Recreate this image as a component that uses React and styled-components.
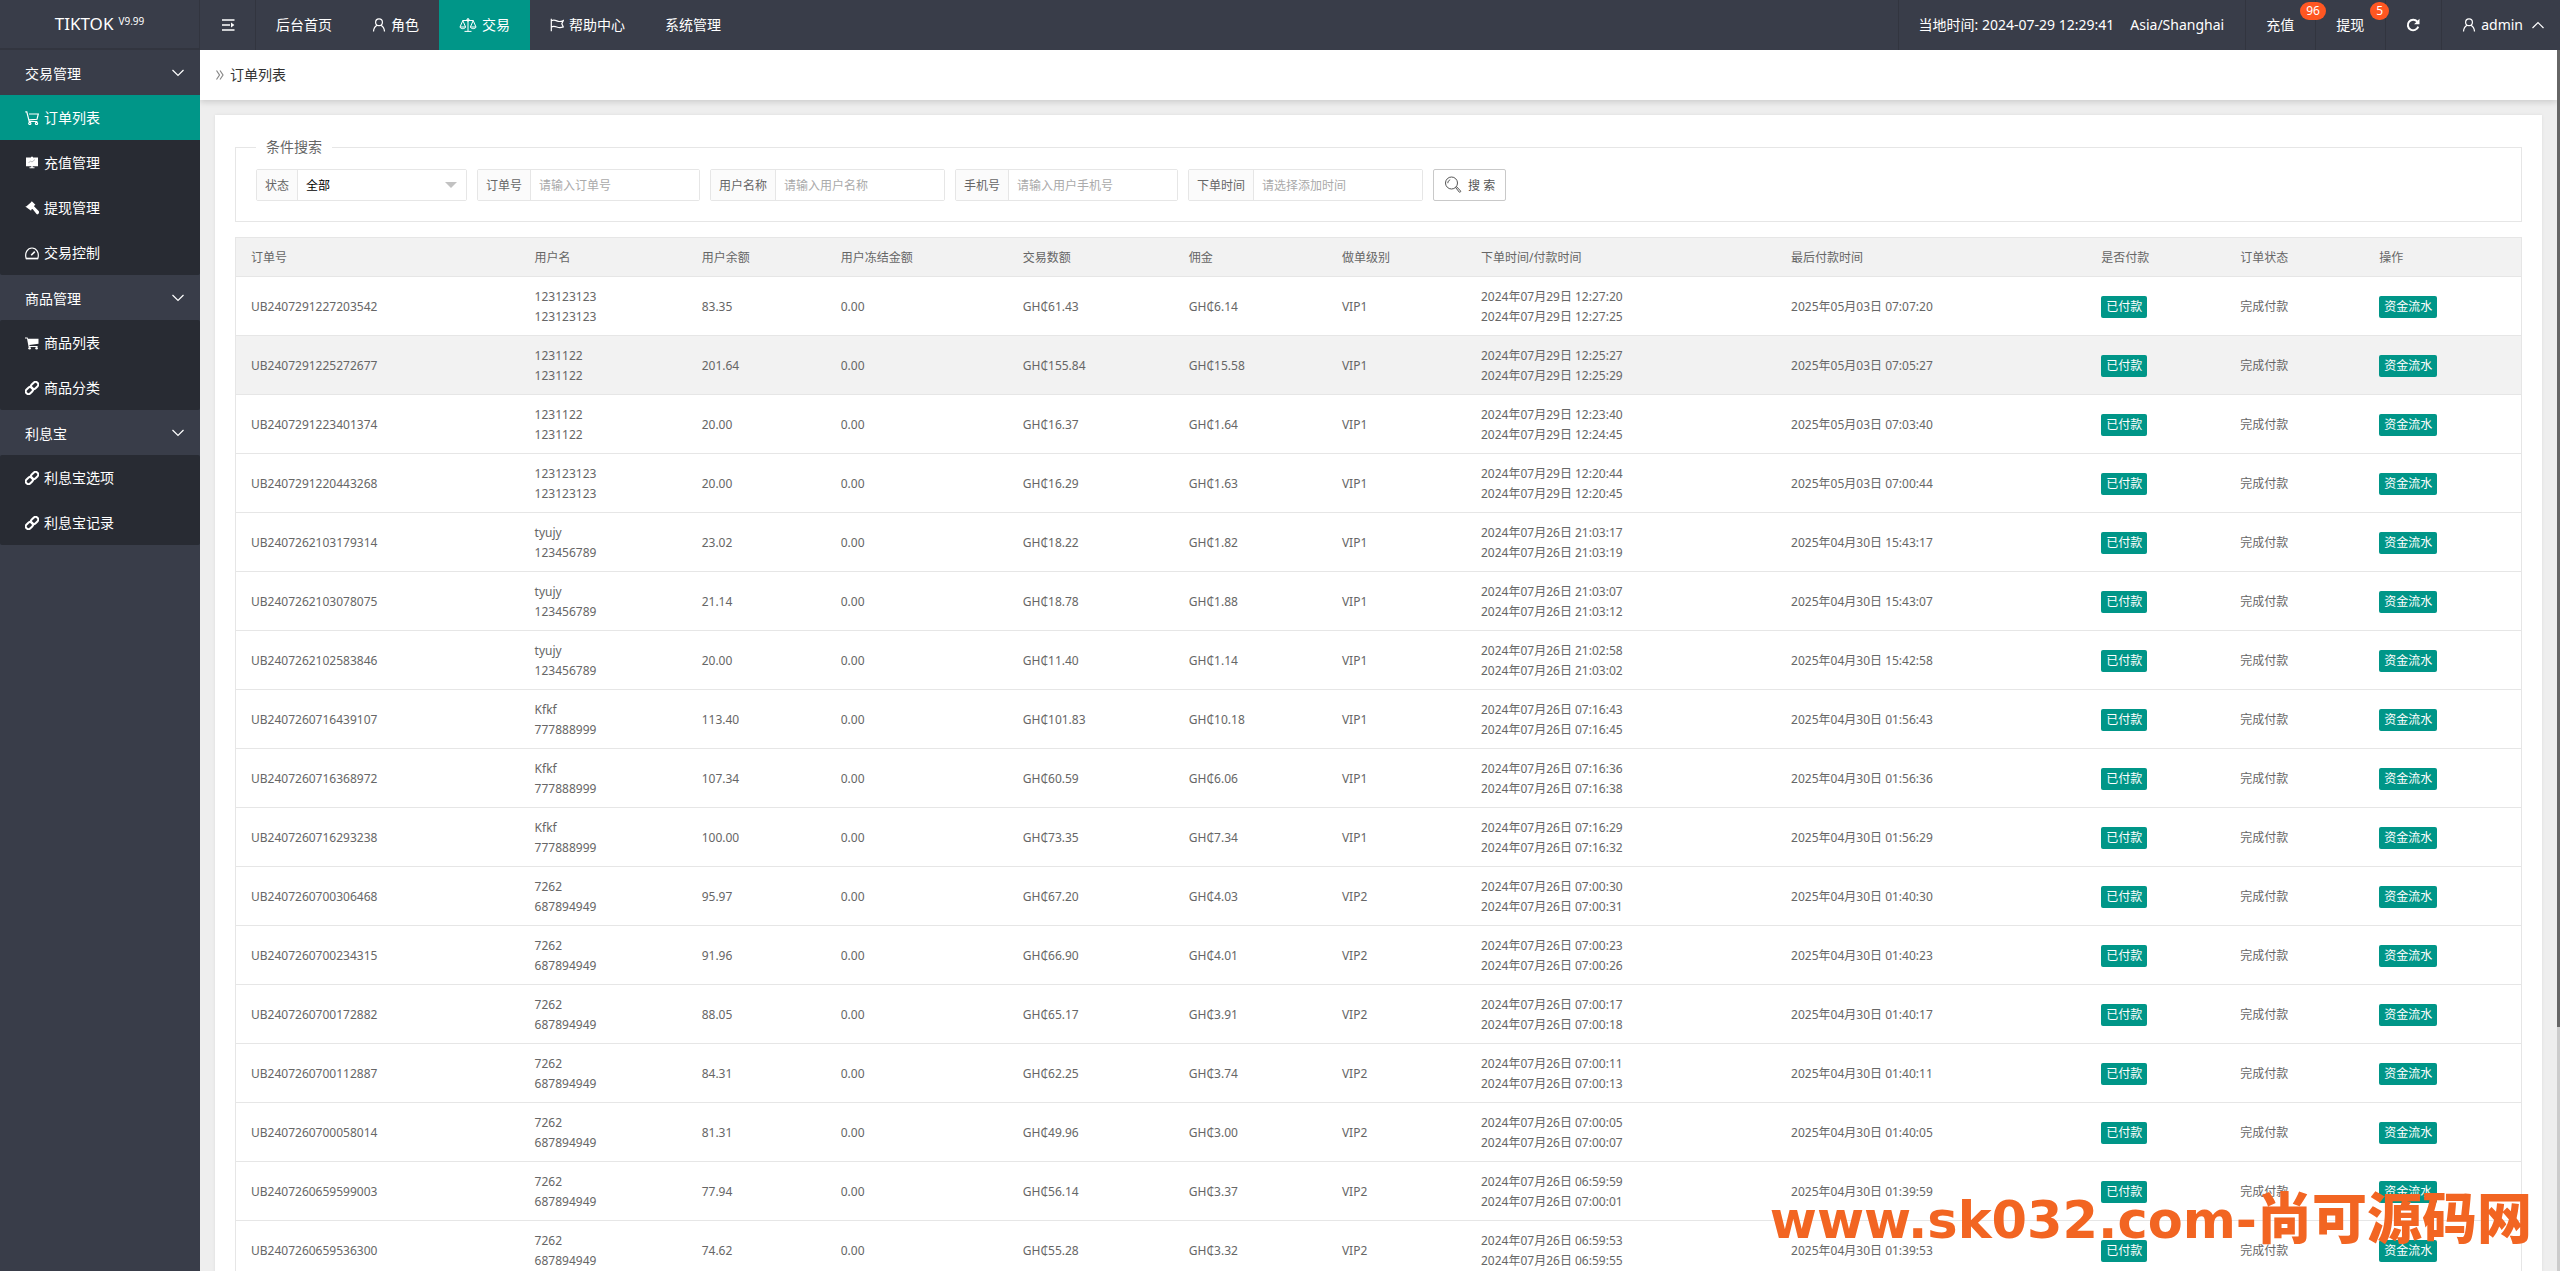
import React from "react";
import styled, { createGlobalStyle } from "styled-components";

const TEAL = "#009688";
const LINE = "#e6e6e6";
const FONT = '"Noto Sans", "Noto Sans CJK SC", sans-serif';

const GlobalStyle = createGlobalStyle`
  *, *::before, *::after { box-sizing: border-box; }
  body {
    margin: 0;
    overflow: hidden;
    background: #eee;
    color: #666;
    font: 14px/24px ${FONT};
  }
  a { color: inherit; text-decoration: none; }
  button, input, select { font-family: inherit; }
`;

const Shell = styled.div`
  display: grid;
  grid-template: 50px minmax(0, 1fr) / 200px minmax(0, 1fr);
  height: 100vh;
`;

/* ---------- top bar ---------- */
const Brand = styled.a`
  display: flex;
  justify-content: center;
  background: #393d49;
  color: #fff;
  font-size: 17px;
  line-height: 48px;
  border-right: 1px solid #32353f;
  border-bottom: 2px solid #32353f;
`;
const Version = styled.sup`
  margin-left: 5px;
  font-size: 10px;
  line-height: 42px;
`;
const TopBar = styled.header`
  display: flex;
  background: #393d49;
  color: #fff;
`;
const ToggleButton = styled.button`
  display: flex;
  align-items: center;
  justify-content: center;
  width: 56px;
  padding: 0;
  border: 0;
  border-right: 1px solid #32353f;
  background: none;
  color: #fff;
`;
const TopNav = styled.nav`
  display: flex;
  flex: 1;
`;
const TopLink = styled.a`
  display: flex;
  align-items: center;
  gap: 5px;
  padding: 0 20px;
  white-space: nowrap;
  background: ${(p) => (p.$active ? TEAL : "transparent")};
`;
const Tools = styled.div`
  display: flex;
`;
const Tool = styled.a`
  position: relative;
  display: flex;
  align-items: center;
  gap: ${(p) => p.$gap || 0}px;
  padding: 0 ${(p) => p.$right || 21}px 0 20px;
  border-left: 1px solid #32353f;
  white-space: nowrap;
`;
const UserName = styled.span`
  margin-right: 4px;
`;
const Badge = styled.span`
  position: absolute;
  z-index: 1;
  top: 2px;
  left: 54px;
  padding: 0 6px;
  border-radius: 9px;
  background: #ff5722;
  font-size: 12px;
  line-height: 18px;
`;

/* ---------- sidebar ---------- */
const Sidebar = styled.nav`
  background: #393d49;
  color: #fff;
`;
const GroupButton = styled.button`
  display: flex;
  align-items: center;
  justify-content: space-between;
  width: 100%;
  height: 45px;
  padding: 0 16px 0 25px;
  border: 0;
  background: none;
  color: #fff;
  font-size: 14px;
`;
const GroupBody = styled.div`
  background: #282b33;
  border-radius: 2px;
`;
const SideLink = styled.a`
  display: flex;
  align-items: center;
  gap: 5px;
  height: 45px;
  padding: 0 25px;
  background: ${(p) => (p.$active ? TEAL : "transparent")};
`;

/* ---------- main area ---------- */
const Stage = styled.main`
  display: flex;
  min-height: 0;
  overflow: hidden;
`;
const Page = styled.div`
  flex: 1;
  min-width: 0;
`;
const Rail = styled.div`
  width: 3px;
  background: #ccc;
`;
const Thumb = styled.div`
  height: 80%;
  background: #666;
`;
const Crumb = styled.h1`
  display: flex;
  align-items: center;
  gap: 6px;
  height: 50px;
  margin: 0;
  padding: 0 16px;
  background: #fff;
  box-shadow: 0 2px 6px rgba(0, 0, 0, 0.15);
  color: #333;
  font-size: 14px;
  font-weight: 400;
`;
const Card = styled.section`
  margin: 15px;
  padding: 20px;
  background: #fff;
  box-shadow: 0 0 3px rgba(0, 0, 0, 0.08);
`;
const SearchBox = styled.fieldset`
  margin: 0 0 15px;
  padding: 10px 20px 20px;
  border: 1px solid ${LINE};
`;
const Legend = styled.legend`
  padding: 0 10px;
`;
const SearchForm = styled.form`
  display: flex;
  flex-wrap: wrap;
  gap: 10px;
`;
const Field = styled.div`
  display: flex;
  height: 32px;
  border: 1px solid ${LINE};
  border-radius: 2px;
  font-size: 12px;
`;
const FieldLabel = styled.label`
  padding: 0 8px;
  background: #fbfbfb;
  border-right: 1px solid ${LINE};
  line-height: 32px;
`;
const TextInput = styled.input`
  width: 168px;
  padding: 0 8px;
  border: 0;
  background: #fff;
  font-size: 12px;
  outline: 0;
  &::placeholder { color: #aaa; }
`;
const SelectWrap = styled.div`
  display: grid;
  grid-template-columns: 168px;
  align-items: center;
  & > * { grid-area: 1 / 1; }
  & > svg { justify-self: end; margin-right: 9px; pointer-events: none; }
`;
const Select = styled.select`
  appearance: none;
  width: 100%;
  height: 30px;
  padding: 0 8px;
  border: 0;
  background: #fff;
  color: #000;
  font-size: 12px;
`;
const SearchButton = styled.button`
  display: flex;
  align-items: center;
  gap: 6px;
  height: 32px;
  padding: 0 10px;
  border: 1px solid #c9c9c9;
  border-radius: 2px;
  background: #fff;
  color: #555;
  font-size: 12px;
`;

/* ---------- orders table ---------- */
const OrdersTable = styled.table`
  width: 100%;
  min-width: 1500px;
  table-layout: fixed;
  border-collapse: collapse;
  border: 1px solid ${LINE};
  font-size: 12px;
  line-height: 20px;
`;
const Col = styled.col`
  width: ${(p) => (p.$share / 2285) * 100}%;
`;
const Row = styled.tr`
  background: ${(p) => (p.$shaded ? "#f2f2f2" : "#fff")};
  border-bottom: 1px solid ${LINE};
`;
const Th = styled.th`
  padding: 10px 15px 8px;
  font-weight: 400;
  text-align: left;
`;
const Td = styled.td`
  padding: 10px 15px 8px;
  white-space: nowrap;
`;
const Tag = styled.a`
  display: inline-block;
  padding: 0 5px;
  border-radius: 2px;
  background: ${TEAL};
  color: #fff;
  line-height: 22px;
  vertical-align: middle;
`;

const Watermark = styled.div`
  position: fixed;
  right: 28px;
  bottom: 18px;
  display: flex;
  align-items: baseline;
  color: #f26522;
  font: 700 51px/64px "DejaVu Sans", sans-serif;
  pointer-events: none;
`;
const WatermarkCjk = styled.span`
  font: 900 55px/64px "Noto Sans CJK SC", sans-serif;
`;

/* ---------- icons ---------- */
const Svg = ({ w = 14, h = 14, box = "0 0 14 14", children, fill = "none", sw = 1.2 }) => (
  <svg width={w} height={h} viewBox={box} fill={fill} stroke={fill === "none" ? "currentColor" : "none"} strokeWidth={sw} aria-hidden="true">
    {children}
  </svg>
);
const MenuIcon = () => (
  <Svg sw={1.6}>
    <path d="M1 2h12.5M1 7h8M1 12h12.5" />
    <path d="M10 4.6L13.4 7 10 9.4z" fill="currentColor" stroke="none" />
  </Svg>
);
const UserIcon = () => (
  <Svg>
    <circle cx="7" cy="4.3" r="3.4" />
    <path d="M5.2 7.3C3 8.400 1.700 10.500 1.500 13.500M8.800 7.300c2.200 1.100 3.500 3.200 3.700 6.200" />
  </Svg>
);
const ScaleIcon = () => (
  <Svg w={18} box="0 0 18 14" sw={1}>
    <path d="M9 .3v13M5.500 13.400h7M3.500 2.500h11M3.800 2.600L1 9h5.600zM14.200 2.600L11.400 9H17zM1 9c.4 2.200 5.200 2.200 5.600 0M11.400 9c.4 2.200 5.200 2.200 5.600 0" />
    <circle cx="9" cy="2" r="1.200" />
  </Svg>
);
const FlagIcon = () => (
  <Svg>
    <path d="M1.300.8v12.500M1.300 2.800c2-1 3.500-.8 5.500.1s4 .9 6.500-.3l-1.500 3.100 1.500 3.200c-2.500 1-4.500.9-6.500.1s-3.500-1-5.500-.1" />
  </Svg>
);
const RefreshIcon = () => (
  <Svg sw={2}>
    <path d="M11.300 3.700A5.300 5.300 0 1 0 12.200 8.600" />
    <path d="M13.500.8v5.400H8.100z" fill="currentColor" stroke="none" />
  </Svg>
);
const Chevron = ({ up }) => (
  <Svg w={12} h={12} box="0 0 12 12" sw={1.200}>
    <path d={up ? "M.5 9L6 3.500 11.500 9" : "M.5 3L6 8.500 11.500 3"} />
  </Svg>
);
const CartOutline = () => (
  <Svg>
    <path d="M.3.8h1.500l2.400 9.700h8.200M4 3h9.300l-1.300 5.300-8 .6" />
    <circle cx="4.800" cy="12.400" r="1.100" />
    <circle cx="11.500" cy="12.400" r="1.100" />
  </Svg>
);
const BoardIcon = () => (
  <Svg fill="currentColor">
    <path d="M1 1.500h5V.8h2v.7h5v8.700H7.700v1h1.800v1h-5v-1h1.800v-1H1z" />
    <path d="M3.500 7l2-2 1.500 1 3-2.500" fill="none" stroke="#9a9ca1" strokeWidth=".7" />
  </Svg>
);
const GavelIcon = () => (
  <Svg fill="currentColor">
    <path d="M6.800.2l3.600 3.600-1 .6-.4.900 4.600 4.800c1 1.100.2 2.600-.9 3.200-.8.300-1.300-.2-1.600-.8L7.600 7.900l-1.300.7-.2 1.200L.3 5.600l1.200-.4L5.800 1.500z" />
  </Svg>
);
const GaugeIcon = () => (
  <Svg>
    <path d="M1.200 12.600C-.6 6.800 2.600 2 7 2s7.600 4.800 5.800 10.600z" />
    <path d="M6.200 9.300L9.800 5.600" strokeWidth="1.600" />
    <path d="M1 12.400h12" strokeWidth="1.800" opacity=".6" />
  </Svg>
);
const CartSolid = () => (
  <Svg fill="currentColor">
    <path d="M0 1.500h2.600l.4 1.300h10.500v5L4.400 9l.2 1h8v1.100H3.600L2 2.600H0z" />
    <circle cx="4.600" cy="12.300" r="1.300" />
    <circle cx="11.600" cy="12.300" r="1.300" />
  </Svg>
);
const LinkIcon = () => (
  <Svg sw={2}>
    <rect x="5.600" y="1.800" width="8" height="5.400" rx="2.700" transform="rotate(-45 9.600 4.500)" />
    <rect x=".4" y="6.800" width="8" height="5.400" rx="2.700" transform="rotate(-45 4.400 9.500)" />
  </Svg>
);
const DoubleArrow = () => (
  <Svg w={8} h={10} box="0 0 8 10" sw={1.200}>
    <path d="M.5.5L3.500 5 .5 9.500M4 .5L7 5 4 9.500" stroke="#888" />
  </Svg>
);
const CaretDown = () => (
  <Svg w={12} h={6} box="0 0 12 6" fill="#c2c2c2">
    <path d="M0 0h12L6 6z" />
  </Svg>
);
const SearchIcon = () => (
  <Svg w={18} h={18} box="0 0 18 18" sw={1}>
    <circle cx="7.500" cy="7" r="6" />
    <path d="M3.800 7.200c0-1.600 1-3 2.400-3.400M11.600 11.500l1-.8 4 4.300c.3.900-.5 1.500-1.300 1.200z" />
  </Svg>
);

/* ---------- data ---------- */
const topLinks = [
  { label: "后台首页" },
  { label: "角色", Icon: UserIcon },
  { label: "交易", Icon: ScaleIcon, active: true },
  { label: "帮助中心", Icon: FlagIcon },
  { label: "系统管理" },
];
const groups = [
  {
    title: "交易管理",
    items: [
      { label: "订单列表", Icon: CartOutline, active: true },
      { label: "充值管理", Icon: BoardIcon },
      { label: "提现管理", Icon: GavelIcon },
      { label: "交易控制", Icon: GaugeIcon },
    ],
  },
  {
    title: "商品管理",
    items: [
      { label: "商品列表", Icon: CartSolid },
      { label: "商品分类", Icon: LinkIcon },
    ],
  },
  {
    title: "利息宝",
    items: [
      { label: "利息宝选项", Icon: LinkIcon },
      { label: "利息宝记录", Icon: LinkIcon },
    ],
  },
];
const fields = [
  { id: "order", label: "订单号", hint: "请输入订单号" },
  { id: "user", label: "用户名称", hint: "请输入用户名称" },
  { id: "phone", label: "手机号", hint: "请输入用户手机号" },
  { id: "time", label: "下单时间", hint: "请选择添加时间" },
];
const columns = [
  ["订单号", 284], ["用户名", 167], ["用户余额", 139], ["用户冻结金额", 182],
  ["交易数额", 166], ["佣金", 153], ["做单级别", 139], ["下单时间/付款时间", 310],
  ["最后付款时间", 310], ["是否付款", 139], ["订单状态", 139], ["操作", 157],
];
const D29 = "2024年07月29日 ";
const D26 = "2024年07月26日 ";
const M3 = "2025年05月03日 ";
const A30 = "2025年04月30日 ";
const orders = [
  ["UB2407291227203542", "123123123", "123123123", "83.35", "61.43", "6.14", "VIP1", D29 + "12:27:20", D29 + "12:27:25", M3 + "07:07:20"],
  ["UB2407291225272677", "1231122", "1231122", "201.64", "155.84", "15.58", "VIP1", D29 + "12:25:27", D29 + "12:25:29", M3 + "07:05:27"],
  ["UB2407291223401374", "1231122", "1231122", "20.00", "16.37", "1.64", "VIP1", D29 + "12:23:40", D29 + "12:24:45", M3 + "07:03:40"],
  ["UB2407291220443268", "123123123", "123123123", "20.00", "16.29", "1.63", "VIP1", D29 + "12:20:44", D29 + "12:20:45", M3 + "07:00:44"],
  ["UB2407262103179314", "tyujy", "123456789", "23.02", "18.22", "1.82", "VIP1", D26 + "21:03:17", D26 + "21:03:19", A30 + "15:43:17"],
  ["UB2407262103078075", "tyujy", "123456789", "21.14", "18.78", "1.88", "VIP1", D26 + "21:03:07", D26 + "21:03:12", A30 + "15:43:07"],
  ["UB2407262102583846", "tyujy", "123456789", "20.00", "11.40", "1.14", "VIP1", D26 + "21:02:58", D26 + "21:03:02", A30 + "15:42:58"],
  ["UB2407260716439107", "Kfkf", "777888999", "113.40", "101.83", "10.18", "VIP1", D26 + "07:16:43", D26 + "07:16:45", A30 + "01:56:43"],
  ["UB2407260716368972", "Kfkf", "777888999", "107.34", "60.59", "6.06", "VIP1", D26 + "07:16:36", D26 + "07:16:38", A30 + "01:56:36"],
  ["UB2407260716293238", "Kfkf", "777888999", "100.00", "73.35", "7.34", "VIP1", D26 + "07:16:29", D26 + "07:16:32", A30 + "01:56:29"],
  ["UB2407260700306468", "7262", "687894949", "95.97", "67.20", "4.03", "VIP2", D26 + "07:00:30", D26 + "07:00:31", A30 + "01:40:30"],
  ["UB2407260700234315", "7262", "687894949", "91.96", "66.90", "4.01", "VIP2", D26 + "07:00:23", D26 + "07:00:26", A30 + "01:40:23"],
  ["UB2407260700172882", "7262", "687894949", "88.05", "65.17", "3.91", "VIP2", D26 + "07:00:17", D26 + "07:00:18", A30 + "01:40:17"],
  ["UB2407260700112887", "7262", "687894949", "84.31", "62.25", "3.74", "VIP2", D26 + "07:00:11", D26 + "07:00:13", A30 + "01:40:11"],
  ["UB2407260700058014", "7262", "687894949", "81.31", "49.96", "3.00", "VIP2", D26 + "07:00:05", D26 + "07:00:07", A30 + "01:40:05"],
  ["UB2407260659599003", "7262", "687894949", "77.94", "56.14", "3.37", "VIP2", D26 + "06:59:59", D26 + "07:00:01", A30 + "01:39:59"],
  ["UB2407260659536300", "7262", "687894949", "74.62", "55.28", "3.32", "VIP2", D26 + "06:59:53", D26 + "06:59:55", A30 + "01:39:53"],
];

function OrderRow({ order, shaded }) {
  const [id, name, phone, balance, amount, fee, level, placed, paid, last] = order;
  return (
    <Row $shaded={shaded}>
      <Td>{id}</Td>
      <Td>{name}<br />{phone}</Td>
      <Td>{balance}</Td>
      <Td>0.00</Td>
      <Td>GH₵{amount}</Td>
      <Td>GH₵{fee}</Td>
      <Td>{level}</Td>
      <Td>{placed}<br />{paid}</Td>
      <Td>{last}</Td>
      <Td><Tag as="span">已付款</Tag></Td>
      <Td>完成付款</Td>
      <Td><Tag href="#">资金流水</Tag></Td>
    </Row>
  );
}

export default function App() {
  return (
    <>
      <GlobalStyle />
      <Shell>
        <Brand href="#">TIKTOK<Version>V9.99</Version></Brand>
        <TopBar>
          <ToggleButton type="button" aria-label="菜单"><MenuIcon /></ToggleButton>
          <TopNav>
            {topLinks.map(({ label, Icon, active }) => (
              <TopLink key={label} href="#" $active={active}>
                {Icon && <Icon />}
                {label}
              </TopLink>
            ))}
          </TopNav>
          <Tools>
            <Tool as="div" $gap={16}>
              <span>当地时间: 2024-07-29 12:29:41</span>
              <span>Asia/Shanghai</span>
            </Tool>
            <Tool href="#">充值<Badge>96</Badge></Tool>
            <Tool href="#">提现<Badge>5</Badge></Tool>
            <Tool href="#" aria-label="刷新"><RefreshIcon /></Tool>
            <Tool href="#" $gap={5} $right={16}>
              <UserIcon />
              <UserName>admin</UserName>
              <Chevron up />
            </Tool>
          </Tools>
        </TopBar>

        <Sidebar>
          {groups.map((group) => (
            <div key={group.title}>
              <GroupButton type="button">{group.title}<Chevron /></GroupButton>
              <GroupBody>
                {group.items.map(({ label, Icon, active }) => (
                  <SideLink key={label} href="#" $active={active}>
                    <Icon />
                    {label}
                  </SideLink>
                ))}
              </GroupBody>
            </div>
          ))}
        </Sidebar>

        <Stage>
          <Page>
            <Crumb><DoubleArrow />订单列表</Crumb>
            <Card>
              <SearchBox>
                <Legend>条件搜索</Legend>
                <SearchForm>
                  <Field>
                    <FieldLabel htmlFor="status">状态</FieldLabel>
                    <SelectWrap>
                      <Select id="status"><option>全部</option></Select>
                      <CaretDown />
                    </SelectWrap>
                  </Field>
                  {fields.map((f) => (
                    <Field key={f.id}>
                      <FieldLabel htmlFor={f.id}>{f.label}</FieldLabel>
                      <TextInput id={f.id} placeholder={f.hint} />
                    </Field>
                  ))}
                  <SearchButton type="button"><SearchIcon />搜 索</SearchButton>
                </SearchForm>
              </SearchBox>

              <OrdersTable>
                <colgroup>
                  {columns.map(([title, share]) => <Col key={title} $share={share} />)}
                </colgroup>
                <thead>
                  <Row $shaded>
                    {columns.map(([title]) => <Th key={title}>{title}</Th>)}
                  </Row>
                </thead>
                <tbody>
                  {orders.map((order, i) => <OrderRow key={order[0]} order={order} shaded={i === 1} />)}
                </tbody>
              </OrdersTable>
            </Card>
          </Page>
          <Rail><Thumb /></Rail>
        </Stage>
      </Shell>
      <Watermark>www.sk032.com-<WatermarkCjk>尚可源码网</WatermarkCjk></Watermark>
    </>
  );
}
